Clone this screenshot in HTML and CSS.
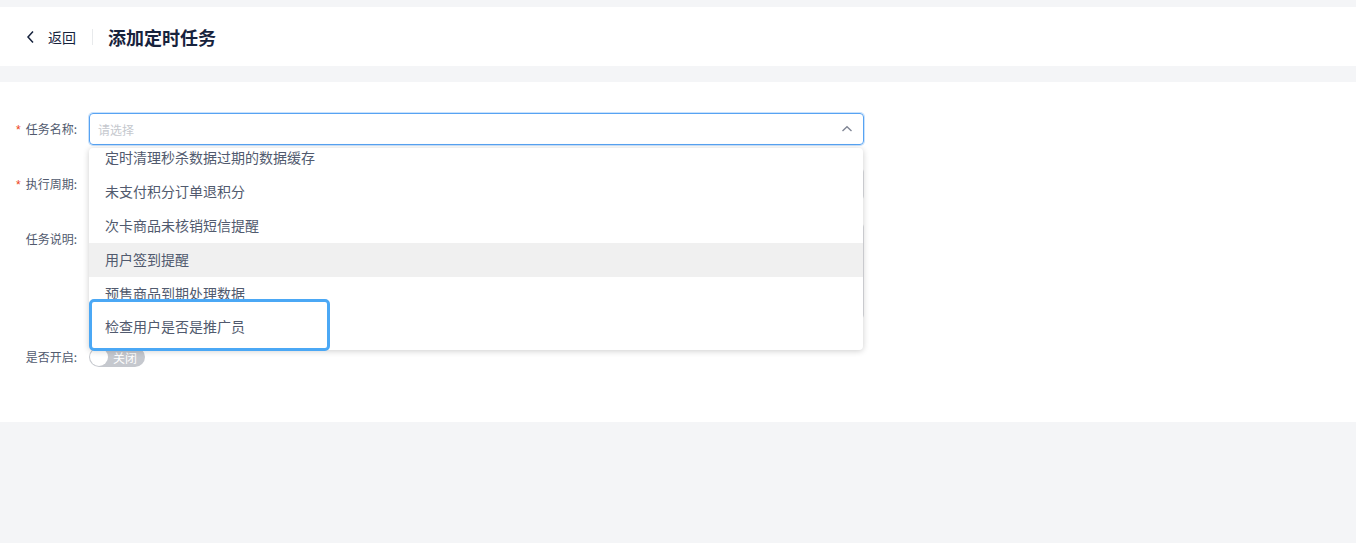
FILE: index.html
```html
<!DOCTYPE html>
<html lang="zh-CN">
<head>
    <meta charset="UTF-8">
    <title>添加定时任务</title>
    <link rel="stylesheet" href="styles.css">
</head>
<body>
    <div class="top-gap"></div>
    <div class="page-header">
        <a class="back">
            <svg width="10" height="14" viewBox="0 0 10 14"><path d="M7 1.5 L2 7 L7 12.5" fill="none" stroke="#17233d" stroke-width="1.5"/></svg>
            <span>返回</span>
        </a>
        <span class="divider"></span>
        <h1 class="title">添加定时任务</h1>
    </div>
    <div class="band"></div>
    <div class="card">
        <form class="form">
            <div class="form-item">
                <label class="label"><i class="req">*</i>任务名称:</label>
                <div class="control select-wrap">
                    <div class="input focus">
                        <span class="placeholder">请选择</span>
                        <svg class="arrow" width="12" height="8" viewBox="0 0 12 8"><path d="M1.5 6 L6 1.8 L10.5 6" fill="none" stroke="#808695" stroke-width="1.4"/></svg>
                    </div>
                    <div class="dropdown">
                        <ul class="options">
                            <li>定时清理秒杀数据过期的数据缓存</li>
                            <li>未支付积分订单退积分</li>
                            <li>次卡商品未核销短信提醒</li>
                            <li class="hover">用户签到提醒</li>
                            <li>预售商品到期处理数据</li>
                        </ul>
                    </div>
                    <div class="mark">检查用户是否是推广员</div>
                </div>
            </div>
            <div class="form-item">
                <label class="label"><i class="req">*</i>执行周期:</label>
                <div class="control"><div class="input"></div></div>
            </div>
            <div class="form-item">
                <label class="label">任务说明:</label>
                <div class="control"><div class="textarea"></div></div>
            </div>
            <div class="form-item">
                <label class="label">是否开启:</label>
                <div class="control">
                    <span class="switch"><span class="knob"></span><span class="switch-text">关闭</span></span>
                </div>
            </div>
        </form>
    </div>
</body>
</html>
```

FILE: styles.css
```css
* {
    box-sizing: border-box;
}
body {
    margin: 0;
    background: #f4f5f7;
    font-family: "Noto Sans CJK SC", "Noto Sans", sans-serif;
    color: #515a6e;
}
.top-gap {
    height: 7px;
}
.page-header {
    height: 59px;
    background: #fff;
    display: flex;
    align-items: center;
    padding-left: 26px;
}
.back {
    display: flex;
    align-items: center;
    font-size: 14px;
    color: #17233d;
}
.back svg {
    margin-right: 12px;
}
.divider {
    width: 1px;
    height: 16px;
    background: #e8eaec;
    margin: 0 15px 0 16px;
}
.title {
    margin: 0;
    font-size: 18px;
    font-weight: 600;
    color: #17233d;
}
.band {
    height: 16px;
}
.card {
    background: #fff;
    height: 340px;
    padding-top: 31px;
}
.form-item {
    display: flex;
    margin-bottom: 22px;
}
.label {
    width: 89px;
    padding-right: 12px;
    text-align: right;
    font-size: 12px;
    line-height: 32px;
    color: #515a6e;
}
.req {
    font-style: normal;
    color: #ed4014;
    margin-right: 5px;
    font-family: "Liberation Sans", sans-serif;
}
.control {
    width: 775px;
}
.select-wrap {
    position: relative;
}
.input {
    height: 32px;
    border: 1px solid #dcdee2;
    border-radius: 4px;
    display: flex;
    align-items: center;
    padding: 0 8px;
}
.input.focus {
    border-color: #57a3f3;
    box-shadow: 0 0 0 1px rgba(45, 140, 240, .25);
}
.placeholder {
    flex: 1;
    font-size: 12px;
    color: #c5c8ce;
}
.arrow {
    margin-right: 2px;
}
.textarea {
    height: 96px;
    border: 1px solid #dcdee2;
    border-radius: 4px;
}
.dropdown {
    position: absolute;
    top: 35px;
    left: 0;
    width: 774px;
    height: 202px;
    background: #fff;
    border-radius: 4px;
    box-shadow: 0 1px 6px rgba(0, 0, 0, .2);
    overflow: hidden;
    z-index: 10;
}
.options {
    list-style: none;
    margin: -7px 0 0;
    padding: 0;
}
.options li {
    height: 34px;
    line-height: 32px;
    padding-left: 16px;
    font-size: 14px;
    color: #515a6e;
}
.options li.hover {
    background: #f0f0f0;
}
.mark {
    position: absolute;
    top: 186px;
    left: 0;
    width: 241px;
    height: 52px;
    border: 3px solid #4ba8f5;
    border-radius: 5px;
    background: #fff;
    padding-left: 13px;
    line-height: 48px;
    font-size: 14px;
    color: #515a6e;
    z-index: 11;
}
.switch {
    display: inline-flex;
    align-items: center;
    margin-top: 6px;
    width: 56px;
    height: 20px;
    border-radius: 10px;
    background: #c5c8ce;
    position: relative;
}
.knob {
    width: 18px;
    height: 18px;
    border-radius: 50%;
    background: #fff;
    margin-left: 1px;
}
.switch-text {
    margin-left: 5px;
    font-size: 12px;
    color: #fff;
}
```
